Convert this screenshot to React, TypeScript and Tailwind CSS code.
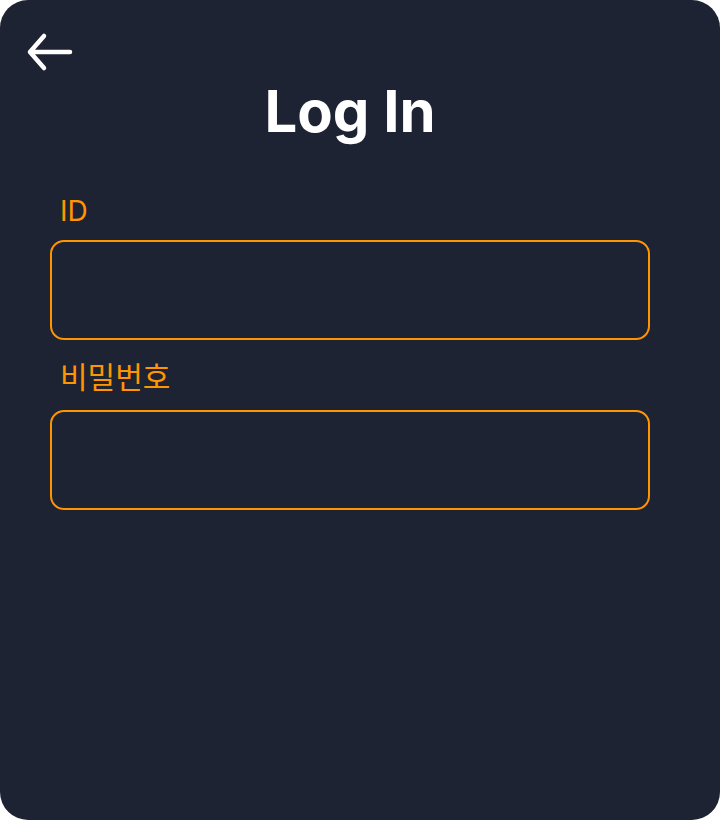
export default function App() {
    return (
        <div className="w-[720px] h-[820px] bg-white">
            <div className="h-full rounded-[28px] bg-[#1e2333] pt-[30px] font-['Inter','Noto_Sans_CJK_KR',sans-serif]">
                {/* 뒤로가기 */}
                <button type="button" className="ml-[24px] block" aria-label="back">
                    <svg width="50" height="44" viewBox="0 0 50 44" fill="none">
                        <path d="M46 22H6M20 6L6 22L20 38" stroke="#ffffff" strokeWidth="4.5" strokeLinecap="round" strokeLinejoin="round" />
                    </svg>
                </button>

                <div className="ml-[50px] w-[600px] flex flex-col">
                    <h1 className="mt-[8px] text-center text-[58px] leading-none font-bold text-white">
                        Log In
                    </h1>

                    {/* ID */}
                    <label className="mt-[57px] flex flex-col">
                        <span className="pl-[10px] text-[28px] leading-none text-[#ff9500]">ID</span>
                        <input className="mt-[15px] h-[100px] w-full rounded-[14px] border-2 border-[#ff9500] bg-transparent px-4 text-white outline-none" />
                    </label>

                    {/* 비밀번호 */}
                    <label className="mt-[22px] flex flex-col">
                        <span className="pl-[10px] text-[30px] leading-none text-[#ff9500]">비밀번호</span>
                        <input type="password" className="mt-[18px] h-[100px] w-full rounded-[14px] border-2 border-[#ff9500] bg-transparent px-4 text-white outline-none" />
                    </label>
                </div>
            </div>
        </div>
    );
}
